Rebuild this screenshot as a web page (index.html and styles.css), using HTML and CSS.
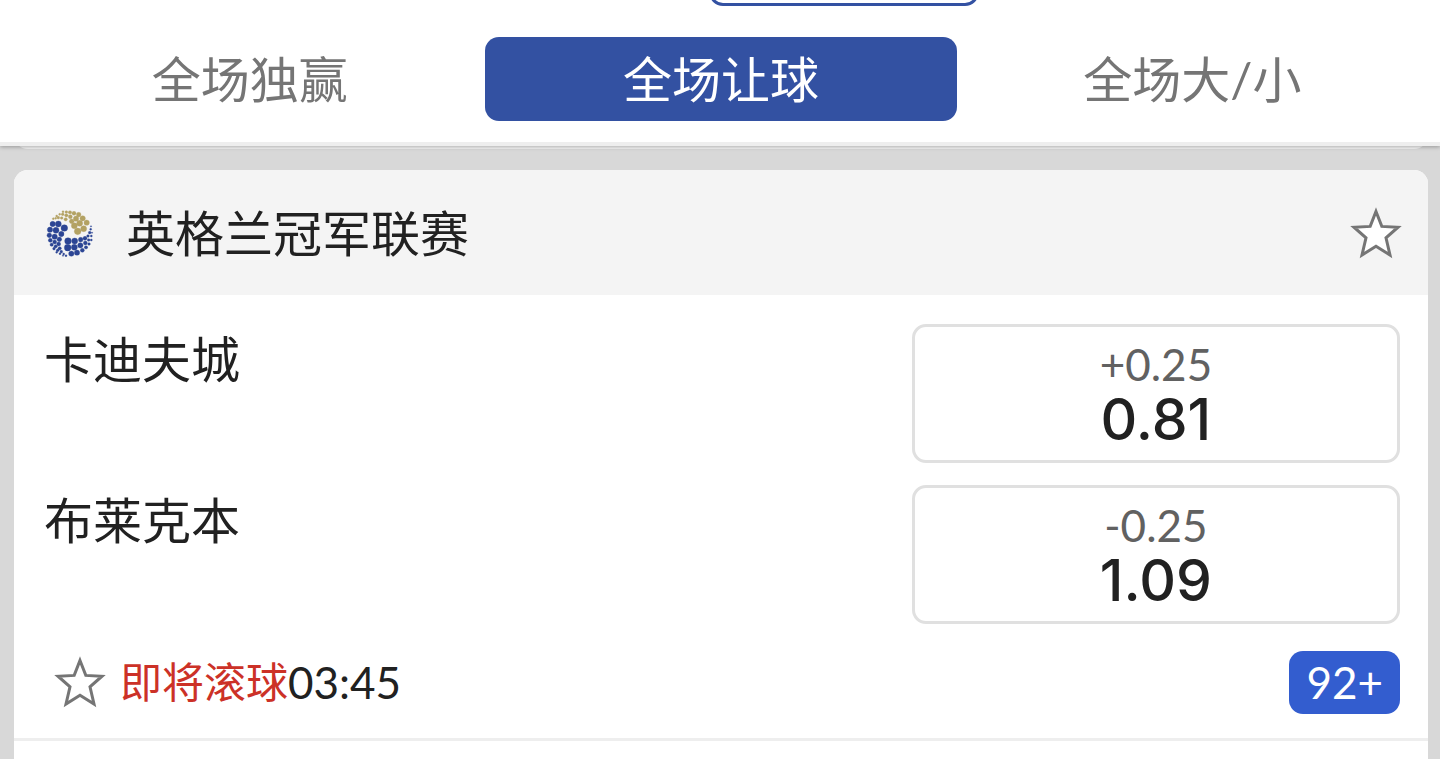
FILE: index.html
```html
<!DOCTYPE html>
<html lang="zh-CN">
<head>
  <meta charset="UTF-8" />
  <meta name="viewport" content="width=device-width, initial-scale=1" />
  <title>全场让球</title>
  <link rel="stylesheet" href="styles.css">
</head>
<body>
  <header class="topbar">
    <div class="filter-row"><div class="filter-box"></div></div>
    <nav class="tabs">
      <button class="tab" type="button">全场独赢</button>
      <button class="tab active" type="button">全场让球</button>
      <button class="tab" type="button">全场大/小</button>
    </nav>
  </header>

  <main>
    <div class="prev-card"></div>
    <section class="card">
      <div class="league">
        <svg class="league-logo" viewBox="48 39 144 144" aria-hidden="true">
          <g fill="#b3a263" stroke="#b3a263">
            <circle cx="138" cy="68" r="8"/><circle cx="158" cy="67" r="8"/>
            <circle cx="125" cy="76" r="7"/><circle cx="149" cy="82" r="9"/><circle cx="170" cy="80" r="8"/>
            <circle cx="133" cy="89" r="9"/><circle cx="161" cy="98" r="9"/><circle cx="143" cy="106" r="10"/>
            <circle cx="132" cy="52" r="6"/><circle cx="146" cy="56" r="7"/><circle cx="121" cy="62" r="6"/>
            <circle cx="120" cy="49" r="5"/><circle cx="109" cy="58" r="5"/><circle cx="107" cy="70" r="5"/>
            <circle cx="109" cy="48" r="4"/><circle cx="98" cy="55" r="4"/><circle cx="95" cy="66" r="4"/>
            <circle cx="99" cy="47" r="3"/><circle cx="89" cy="55" r="3"/><circle cx="85" cy="65" r="4"/>
            <circle cx="80" cy="60" r="3"/><circle cx="77" cy="67" r="3"/><circle cx="70" cy="68" r="3"/>
          </g>
          <g fill="#2c4594" stroke="#2c4594">
            <circle cx="68" cy="84" r="8"/><circle cx="85" cy="84" r="9"/><circle cx="103" cy="96" r="10"/>
            <circle cx="60" cy="101" r="8"/><circle cx="78" cy="103" r="9"/><circle cx="94" cy="114" r="8"/>
            <circle cx="58" cy="118" r="7"/><circle cx="74" cy="122" r="8"/><circle cx="88" cy="130" r="7"/>
            <circle cx="61" cy="133" r="6"/><circle cx="74" cy="138" r="6"/><circle cx="86" cy="144" r="6"/>
            <circle cx="65" cy="146" r="5"/><circle cx="77" cy="151" r="5"/><circle cx="89" cy="157" r="5"/>
            <circle cx="72" cy="158" r="4"/><circle cx="83" cy="163" r="4"/><circle cx="94" cy="167" r="4"/>
            <circle cx="80" cy="169" r="3"/><circle cx="90" cy="173" r="3"/><circle cx="101" cy="174" r="3"/>
            <circle cx="99" cy="179" r="2"/><circle cx="108" cy="179" r="3"/>
            <circle cx="114" cy="135" r="10"/><circle cx="134" cy="135" r="9"/><circle cx="152" cy="131" r="7"/>
            <circle cx="113" cy="155" r="10"/><circle cx="133" cy="154" r="9"/><circle cx="151" cy="148" r="8"/>
            <circle cx="124" cy="173" r="8"/><circle cx="141" cy="170" r="8"/><circle cx="157" cy="163" r="6"/>
            <circle cx="165" cy="127" r="6"/><circle cx="166" cy="141" r="6"/><circle cx="168" cy="154" r="5"/>
            <circle cx="174" cy="120" r="4"/><circle cx="176" cy="132" r="4"/><circle cx="177" cy="144" r="4"/>
            <circle cx="179" cy="110" r="4"/><circle cx="184" cy="120" r="3"/><circle cx="184" cy="132" r="3"/>
            <circle cx="182" cy="100" r="3"/><circle cx="186" cy="110" r="2"/><circle cx="183" cy="91" r="2"/>
          </g>
        </svg>
        <h1 class="league-name">英格兰冠军联赛</h1>
        <button class="star" type="button" aria-label="收藏联赛">
          <svg viewBox="0 0 52 52"><path d="M26 4.500 31.800 19.400 48 20.200 36 30.800 40 48 26 39.300 12 48 16 30.800 4 20.200 20.200 19.400Z"/></svg>
        </button>
      </div>

      <div class="match">
        <div class="team-row">
          <span class="team">卡迪夫城</span>
          <button class="odds" type="button">
            <span class="handicap">+0.25</span>
            <span class="price">0.81</span>
          </button>
        </div>
        <div class="team-row">
          <span class="team">布莱克本</span>
          <button class="odds" type="button">
            <span class="handicap">-0.25</span>
            <span class="price">1.09</span>
          </button>
        </div>
        <div class="match-info">
          <button class="star" type="button" aria-label="收藏比赛">
            <svg viewBox="0 0 52 52"><path d="M26 4.500 31.800 19.400 48 20.200 36 30.800 40 48 26 39.300 12 48 16 30.800 4 20.200 20.200 19.400Z"/></svg>
          </button>
          <span class="status">即将滚球</span><time class="time">03:45</time>
          <a class="more" href="#">92+</a>
        </div>
      </div>
    </section>
  </main>
</body>
</html>
```

FILE: styles.css
```css
:root {
  --page: #d8d8d8;
  --blue: #3351a2;
  --link: #335dcf;
  --text: #212121;
  --muted: #757575;
}

* {
  box-sizing: border-box;
}

body {
  display: flex;
  flex-direction: column;
  min-height: 100vh;
  margin: 0;
  background: var(--page);
  color: var(--text);
  font-family: Lato, "Noto Sans CJK SC", sans-serif;
  font-size: 49px;
  line-height: 70px;
}

button {
  margin: 0;
  padding: 0;
  border: 0;
  background: none;
  font: inherit;
  color: inherit;
  cursor: pointer;
}

.topbar {
  position: relative;
  z-index: 1;
  background: #fff;
  border-bottom: 4px solid #eee;
  box-shadow: 0 1px 4px rgba(0, 0, 0, 0.3);
}

.filter-row {
  display: flex;
  justify-content: center;
  height: 37px;
  padding-left: 247px;
  overflow: hidden;
}

.filter-box {
  width: 270px;
  height: 60px;
  margin-top: -54px;
  border: 3px solid var(--blue);
  border-radius: 14px;
}

.tabs {
  display: grid;
  grid-template-columns: repeat(3, 1fr);
  padding: 0 12px 21px 14px;
}

.tab {
  height: 84px;
  border-radius: 14px;
  color: var(--muted);
}

.tab.active {
  background: var(--blue);
  color: #fff;
}

main {
  flex: 1;
  display: flex;
  flex-direction: column;
  padding: 0 12px 0 14px;
}

/* bottom of the card above, mostly under the top bar */
.prev-card {
  height: 40px;
  margin-top: -37px;
  margin-bottom: 21px;
  background: #f4f4f4;
  border-radius: 14px;
}

.card {
  flex: 1;
  background: #fff;
  border-radius: 14px 14px 0 0;
  overflow: hidden;
}

.league {
  display: flex;
  align-items: center;
  height: 125px;
  padding: 0 26px 0 32px;
  background: #f4f4f4;
}

.league-logo {
  width: 48px;
  height: 48px;
  margin-right: 32px;
}

.league-name {
  flex: 1;
  margin: 0;
  font-size: 49px;
  font-weight: 400;
}

.star {
  display: flex;
}

.star svg {
  width: 52px;
  height: 52px;
  fill: #fff;
  stroke: var(--muted);
  stroke-width: 3;
}

.match {
  display: flex;
  flex-direction: column;
  gap: 22px;
  padding: 29px 28px 20px 30px;
  border-bottom: 3px solid #eee;
}

.team-row {
  display: flex;
  justify-content: space-between;
  align-items: flex-start;
}

.odds {
  display: flex;
  flex-direction: column;
  align-items: center;
  justify-content: center;
  width: 36%;
  height: 139px;
  border: 3px solid #e0e0e0;
  border-radius: 14px;
}

.handicap {
  font-size: 44px;
  line-height: 52px;
  color: #616161;
}

.price {
  font-family: Inter, sans-serif;
  font-size: 57px;
  font-weight: 500;
  line-height: 60px;
}

.match-info {
  display: flex;
  align-items: center;
  height: 72px;
  padding-left: 10px;
  font-size: 44px;
}

.status {
  margin-left: 14px;
  font-size: 42px;
  color: #cc3127;
}

.more {
  margin-left: auto;
  padding: 0 17px;
  border-radius: 14px;
  background: var(--link);
  color: #fff;
  line-height: 63px;
  text-decoration: none;
}
```
